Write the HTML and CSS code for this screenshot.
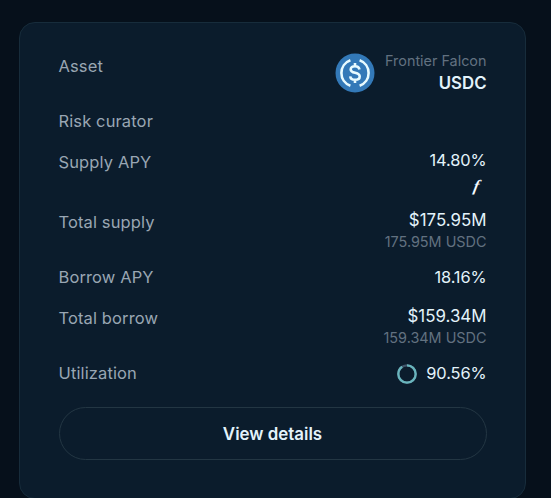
FILE: index.html
```
<!DOCTYPE html>
<html lang="en">
<head>
    <meta charset="utf-8">
    <title>USDC market</title>
    <link rel="stylesheet" href="styles.css">
</head>
<body>

<div class="card">
    <div class="row tall">
        <span class="label">Asset</span>
        <div class="asset">
            <svg class="coin" viewBox="0 0 40 40">
                <circle cx="20" cy="20" r="19.5" fill="#3379b8"/>
                <g fill="none" stroke="#e8fbff" stroke-width="2.6">
                    <path d="M15.4 7.2a13.6 13.6 0 0 0 0 25.6M24.6 7.2a13.6 13.6 0 0 1 0 25.6"/>
                    <path d="M24.5 16.4c-.4-2.2-2-3.2-4.5-3.2-2.6 0-4.3 1.2-4.3 3.2 0 4.6 9 2.3 9 7.1 0 2.1-1.9 3.3-4.7 3.3-2.7 0-4.5-1.2-4.8-3.5M20 10v3.4M20 26.6v3.4"/>
                </g>
            </svg>
            <div class="value-group">
                <span class="sub">Frontier Falcon</span>
                <span class="value bold">USDC</span>
            </div>
        </div>
    </div>
    <div class="row">
        <span class="label">Risk curator</span>
    </div>
    <div class="row reward">
        <span class="label">Supply APY</span>
        <div class="value-group">
            <span class="value percent">14.80%</span>
            <span class="fluid">f</span>
        </div>
    </div>
    <div class="row tall">
        <span class="label">Total supply</span>
        <div class="value-group">
            <span class="value">$175.95M</span>
            <span class="sub">175.95M USDC</span>
        </div>
    </div>
    <div class="row">
        <span class="label">Borrow APY</span>
        <span class="value percent single">18.16%</span>
    </div>
    <div class="row tall">
        <span class="label">Total borrow</span>
        <div class="value-group">
            <span class="value">$159.34M</span>
            <span class="sub">159.34M USDC</span>
        </div>
    </div>
    <div class="row">
        <span class="label">Utilization</span>
        <div class="utilization">
            <svg class="ring" viewBox="0 0 20 20">
                <circle cx="10" cy="10" r="8.7" fill="none" stroke="#40556a" stroke-width="2.3"/>
                <circle cx="10" cy="10" r="8.7" fill="none" stroke="#69b5bd" stroke-width="2.3" pathLength="100" stroke-dasharray="90.56 100" transform="rotate(-90 10 10)"/>
            </svg>
            <span class="value percent single">90.56%</span>
        </div>
    </div>
    <button class="details">View details</button>
</div>

</body>
</html>
```
FILE: styles.css
```
* {
    box-sizing: border-box;
}

body {
    margin: 0;
    height: 498px;
    overflow: hidden;
    padding: 22px 25px 0 19px;
    background-color: #06101b;
    font-family: Inter, sans-serif;
}

.card {
    display: flex;
    flex-direction: column;
    gap: 16px;
    height: 477px;
    padding: 31px 38.5px 0;
    background-color: #0b1c2c;
    border: 1px solid #172c3b;
    border-radius: 16px;
}

.row {
    display: flex;
    justify-content: space-between;
    align-items: flex-start;
    flex-shrink: 0;
    height: 25px;
}

.tall {
    height: 39px;
}

.reward {
    height: 44px;
}

.label {
    color: #99a6b3;
    font-size: 16.5px;
    line-height: 25px;
    letter-spacing: 0.12px;
}

.value-group {
    display: flex;
    flex-direction: column;
    align-items: flex-end;
}

.value {
    color: #e3f3fb;
    font-size: 16.9px;
    line-height: 21px;
}

.percent {
    font-size: 16.4px;
    letter-spacing: -0.1px;
}

.single {
    line-height: 25px;
}

.bold {
    font-size: 16.8px;
    font-weight: 600;
    line-height: 22px;
}

.sub {
    color: #627180;
    font-size: 14.4px;
    line-height: 22px;
}

.asset {
    display: flex;
    gap: 10px;
}

.asset .value-group {
    margin-top: -4px;
}

.coin {
    width: 40px;
    height: 40px;
    margin-top: -1px;
}

.fluid {
    margin-right: 7px;
    color: #f4faff;
    font-family: "Liberation Serif", serif;
    font-size: 16px;
    font-style: italic;
    font-weight: bold;
    line-height: 29px;
    transform: skewX(-12deg);
}

.utilization {
    display: flex;
    align-items: center;
    gap: 9px;
}

.ring {
    width: 20px;
    height: 20px;
}

.details {
    flex-shrink: 0;
    height: 53px;
    margin-top: 5px;
    background: none;
    border: 1px solid #233643;
    border-radius: 27px;
    color: #e3f3fb;
    font-family: Inter, sans-serif;
    font-size: 16.9px;
    font-weight: 600;
}
```
